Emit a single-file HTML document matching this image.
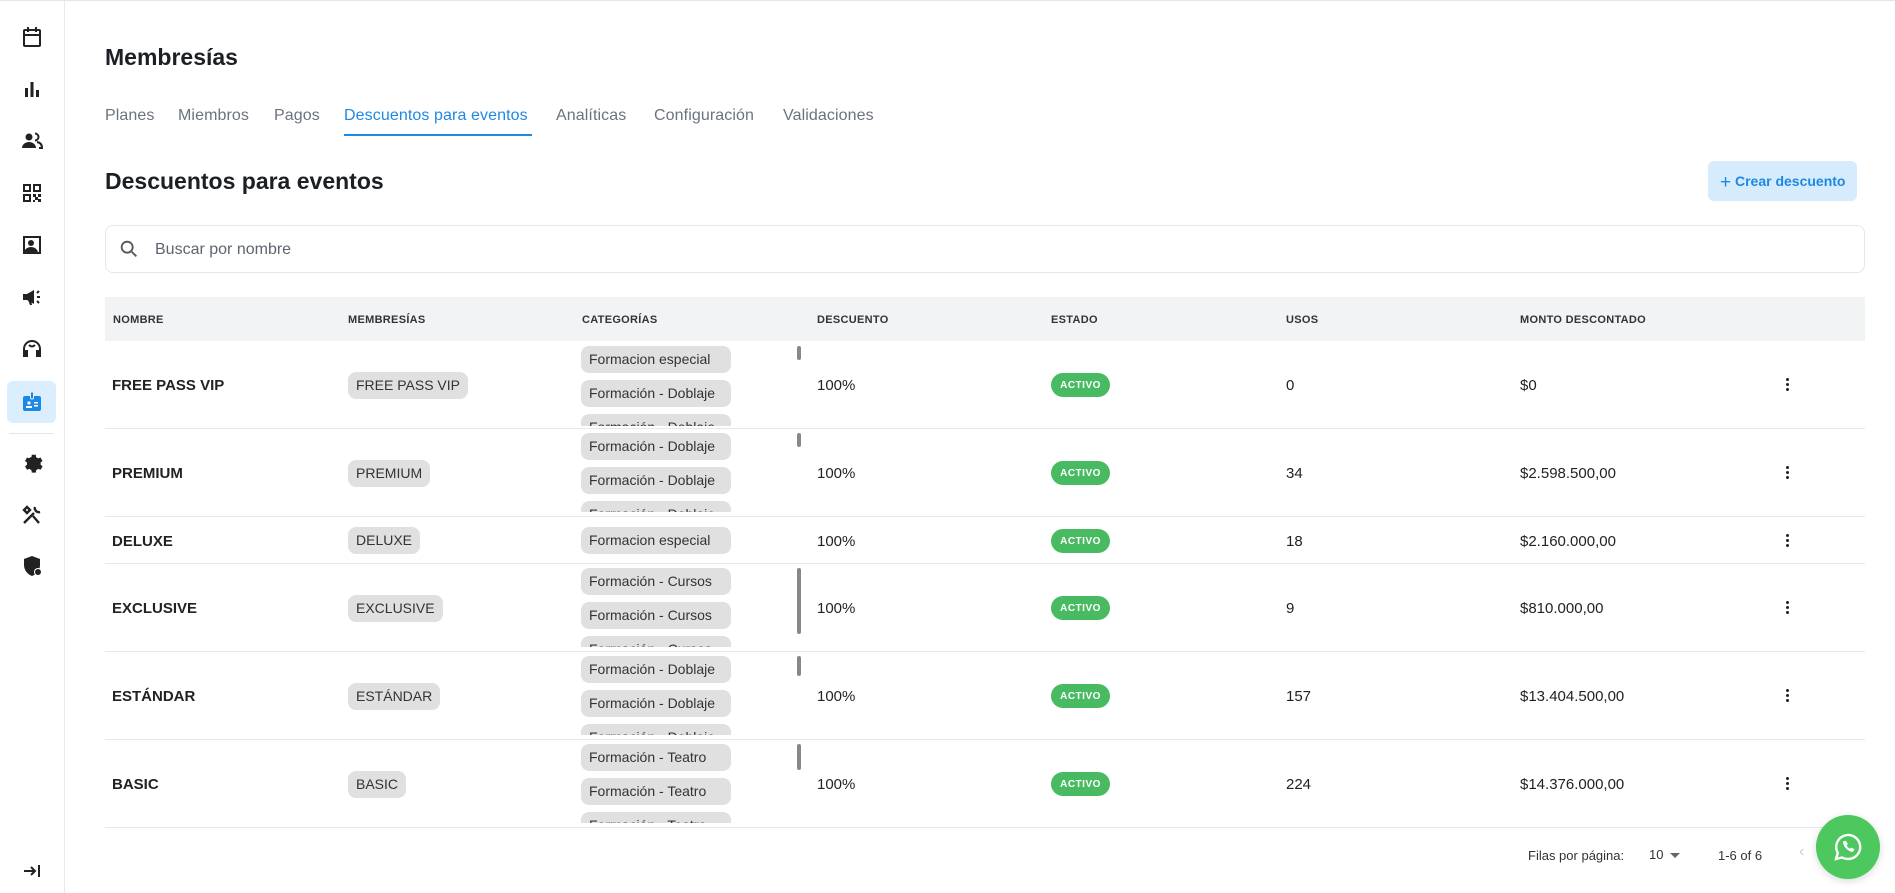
<!DOCTYPE html>
<html><head><meta charset="utf-8"><style>
*{box-sizing:border-box;margin:0;padding:0}
body{width:1895px;height:893px;overflow:hidden;background:#fff;font-family:"Liberation Sans",sans-serif;color:#1f2328;position:relative}
.abs{position:absolute}
.side{left:0;top:0;width:65px;height:893px;border-right:1px solid #e8eaee;border-top:1px solid #e3e5e8}
.ic{position:absolute;left:20px;width:24px;height:24px}
.tab{position:absolute;top:107px;font-size:16px;color:#6b7280;letter-spacing:.1px}
.th{position:absolute;top:314px;font-size:11px;font-weight:bold;color:#333;letter-spacing:.3px}
.row{position:absolute;left:105px;width:1760px;border-bottom:1px solid #e6e8ec}
.cell{position:absolute;font-size:15px;color:#222}
.name{font-weight:bold;left:7px}
.chip{position:absolute;background:#e0e0e0;border-radius:8px;height:27px;line-height:27px;padding:0 8px;font-size:14px;color:#333;white-space:nowrap}
.cats{position:absolute;left:476px;width:150px;overflow:hidden}
.cats .chip{left:0;width:150px;overflow:hidden;text-overflow:ellipsis}
.sb{position:absolute;left:692px;width:4px;background:#888;border-radius:2px}
.act{position:absolute;left:946px;width:59px;height:24px;border-radius:12px;background:#48bb62;color:#fff;font-size:10px;font-weight:bold;display:flex;align-items:center;justify-content:center;letter-spacing:.5px}
.keb{position:absolute;left:1681px;width:4px}
.keb i{display:block;width:3px;height:3px;background:#222;border-radius:50%;margin:0 0 2px}
</style></head><body>
<div class="abs" style="left:0;top:0;width:1895px;height:1px;background:#e3e5e8"></div>
<div class="abs side"></div>
<svg class="ic" style="top:25px" viewBox="0 0 24 24" fill="none" stroke="#222" stroke-width="2"><rect x="4" y="5" width="16" height="16" rx="1"/><path d="M4 10h16M8 2v5M16 2v5"/></svg>
<svg class="ic" style="top:77px" viewBox="0 0 24 24" fill="#222"><rect x="5" y="11" width="3" height="9"/><rect x="10.5" y="5" width="3" height="15"/><rect x="16" y="13" width="3" height="7"/></svg>
<svg class="ic" style="top:129px" viewBox="0 0 24 24" fill="#222"><circle cx="9" cy="8" r="3.5"/><path d="M2 19c0-4 4-6 7-6s7 2 7 6z"/><path d="M15 4.5a3.5 3.5 0 010 7M17 13c3 .5 5 2.5 5 6h-3" stroke="#222" stroke-width="2" fill="none"/></svg>
<svg class="ic" style="top:181px" viewBox="0 0 24 24" fill="#222"><path d="M3 3h8v8H3zM5 5v4h4V5zM13 3h8v8h-8zm2 2v4h4V5zM3 13h8v8H3zm2 2v4h4v-4zM13 13h3v3h-3zM18 13h3v3h-3zM15 16h3v3h-3zM13 19h2v2h-2zM18 18h3v3h-3z"/></svg>
<svg class="ic" style="top:233px" viewBox="0 0 24 24" fill="#222"><path d="M3 3h18v18H3zm2 2v14h14V5z"/><circle cx="11" cy="10" r="3"/><path d="M4 20c0-4 4-6 7-6s7 2 7 6z"/></svg>
<svg class="ic" style="top:285px" viewBox="0 0 24 24" fill="#222"><path d="M3 9h4l7-4v14l-7-4H3z"/><path d="M8 15l2 5h2l-1-5" /><path d="M17 8l2-2M17 12h3M17 16l2 2" stroke="#222" stroke-width="2"/></svg>
<svg class="ic" style="top:337px" viewBox="0 0 24 24" fill="none" stroke="#222" stroke-width="2"><path d="M4 17v-5a8 8 0 0116 0v5"/><path d="M4 14h3v5H4zM17 14h3v5h-3z" fill="#222"/><path d="M9 8c2 2 4 2 6 0"/></svg>
<div class="abs" style="left:7px;top:381px;width:49px;height:42px;background:#dbeefe;border-radius:6px"></div>
<svg class="ic" style="top:390px" viewBox="0 0 24 24" fill="#1e88e5"><rect x="3" y="6" width="18" height="15" rx="2"/><rect x="10.5" y="2" width="3" height="7" rx="1" fill="#1e88e5" stroke="#dbeefe" stroke-width="1"/><circle cx="9" cy="13" r="1.6" fill="#fff"/><rect x="6" y="16" width="6" height="2" fill="#fff"/><rect x="14" y="12" width="4" height="1.5" fill="#fff"/><rect x="14" y="15" width="4" height="1.5" fill="#fff"/></svg>
<div class="abs" style="left:9px;top:433px;width:45px;height:1px;background:#e3e5e8"></div>
<svg class="ic" style="top:451px" viewBox="0 0 24 24" fill="#222"><path d="M12 8a4 4 0 100 8 4 4 0 000-8zm8.5 5.5l2-1.5-2-3.5-2.4.9a7 7 0 00-2-1.2L15.8 5.7h-4l-.4 2.5a7 7 0 00-2 1.2L7 8.5 5 12l2 1.5a7 7 0 000 2.3L5 17.3l2 3.5 2.4-.9a7 7 0 002 1.2l.4 2.5h4l.4-2.5a7 7 0 002-1.2l2.4.9 2-3.5-2-1.5a7 7 0 000-2.3z" transform="translate(0,-2)"/></svg>
<svg class="ic" style="top:503px" viewBox="0 0 24 24" fill="none" stroke="#222" stroke-width="2.4"><path d="M4 20L14 10M7 4l-3 3 3 3 3-3zM13 13l6 7M15 4a4 4 0 005 5"/></svg>
<svg class="ic" style="top:554px" viewBox="0 0 24 24" fill="#222"><path d="M12 2l8 3v6c0 5-3.5 9.5-8 11-4.5-1.5-8-6-8-11V5z"/><circle cx="18" cy="18" r="4" fill="#fff"/><circle cx="18" cy="18" r="3" fill="#222"/></svg>
<svg class="ic" style="top:859px" viewBox="0 0 24 24" fill="none" stroke="#222" stroke-width="2"><path d="M4 12h11M11 8l4 4-4 4M19 6v12"/></svg>

<div class="abs" style="left:105px;top:44px;font-size:23px;font-weight:bold;color:#1c1f24">Membresías</div>
<div class="tab" style="left:105px">Planes</div>
<div class="tab" style="left:178px">Miembros</div>
<div class="tab" style="left:274px">Pagos</div>
<div class="tab" style="left:344px;color:#1e88e5">Descuentos para eventos</div>
<div class="tab" style="left:556px">Analíticas</div>
<div class="tab" style="left:654px">Configuración</div>
<div class="tab" style="left:783px">Validaciones</div>
<div class="abs" style="left:344px;top:134px;width:188px;height:2px;background:#1e88e5"></div>

<div class="abs" style="left:105px;top:168px;font-size:23px;font-weight:bold;color:#1c1f24">Descuentos para eventos</div>
<div class="abs" style="left:1708px;top:161px;width:149px;height:40px;background:#d6ebfc;border-radius:6px;color:#1e88e5;font-size:14px;font-weight:bold;line-height:40px;padding-left:12px"><span style="font-size:19px;font-weight:normal;vertical-align:-2px">+</span>&nbsp;Crear descuento</div>

<div class="abs" style="left:105px;top:225px;width:1760px;height:48px;border:1px solid #e3e6ea;border-radius:8px"></div>
<svg class="abs" style="left:118px;top:238px" width="22" height="22" viewBox="0 0 24 24" fill="none" stroke="#555" stroke-width="2"><circle cx="10" cy="10" r="6"/><path d="M15 15l5 5"/></svg>
<div class="abs" style="left:155px;top:241px;font-size:16px;color:#5d6470">Buscar por nombre</div>

<div class="abs" style="left:105px;top:297px;width:1760px;height:44px;background:#f2f3f5"></div>
<div class="th" style="left:113px">NOMBRE</div>
<div class="th" style="left:348px">MEMBRESÍAS</div>
<div class="th" style="left:582px">CATEGORÍAS</div>
<div class="th" style="left:817px">DESCUENTO</div>
<div class="th" style="left:1051px">ESTADO</div>
<div class="th" style="left:1286px">USOS</div>
<div class="th" style="left:1520px">MONTO DESCONTADO</div>

<div class="row" style="top:341px;height:88px">
 <div class="cell name" style="top:36px">FREE PASS VIP</div>
 <div class="chip" style="left:243px;top:31px">FREE PASS VIP</div>
 <div class="cats" style="top:5px;height:80px"><div class="chip" style="top:0">Formacion especial</div><div class="chip" style="top:34px">Formación - Doblaje</div><div class="chip" style="top:68px">Formación - Doblaje</div></div>
 <div class="sb" style="top:5px;height:14px"></div>
 <div class="cell" style="left:712px;top:36px">100%</div>
 <div class="act" style="top:32px">ACTIVO</div>
 <div class="cell" style="left:1181px;top:36px">0</div>
 <div class="cell" style="left:1415px;top:36px">$0</div>
 <div class="keb" style="top:37px"><i></i><i></i><i></i></div>
</div>
<div class="row" style="top:429px;height:88px">
 <div class="cell name" style="top:36px">PREMIUM</div>
 <div class="chip" style="left:243px;top:31px">PREMIUM</div>
 <div class="cats" style="top:4px;height:79px"><div class="chip" style="top:0">Formación - Doblaje</div><div class="chip" style="top:34px">Formación - Doblaje</div><div class="chip" style="top:68px">Formación - Doblaje</div></div>
 <div class="sb" style="top:4px;height:14px"></div>
 <div class="cell" style="left:712px;top:36px">100%</div>
 <div class="act" style="top:32px">ACTIVO</div>
 <div class="cell" style="left:1181px;top:36px">34</div>
 <div class="cell" style="left:1415px;top:36px">$2.598.500,00</div>
 <div class="keb" style="top:37px"><i></i><i></i><i></i></div>
</div>
<div class="row" style="top:517px;height:47px">
 <div class="cell name" style="top:16px">DELUXE</div>
 <div class="chip" style="left:243px;top:10px">DELUXE</div>
 <div class="cats" style="top:10px;height:27px"><div class="chip" style="top:0">Formacion especial</div></div>
 <div class="cell" style="left:712px;top:16px">100%</div>
 <div class="act" style="top:12px">ACTIVO</div>
 <div class="cell" style="left:1181px;top:16px">18</div>
 <div class="cell" style="left:1415px;top:16px">$2.160.000,00</div>
 <div class="keb" style="top:17px"><i></i><i></i><i></i></div>
</div>
<div class="row" style="top:564px;height:88px">
 <div class="cell name" style="top:36px">EXCLUSIVE</div>
 <div class="chip" style="left:243px;top:31px">EXCLUSIVE</div>
 <div class="cats" style="top:4px;height:79px"><div class="chip" style="top:0">Formación - Cursos</div><div class="chip" style="top:34px">Formación - Cursos</div><div class="chip" style="top:68px">Formación - Cursos</div></div>
 <div class="sb" style="top:4px;height:66px"></div>
 <div class="cell" style="left:712px;top:36px">100%</div>
 <div class="act" style="top:32px">ACTIVO</div>
 <div class="cell" style="left:1181px;top:36px">9</div>
 <div class="cell" style="left:1415px;top:36px">$810.000,00</div>
 <div class="keb" style="top:37px"><i></i><i></i><i></i></div>
</div>
<div class="row" style="top:652px;height:88px">
 <div class="cell name" style="top:36px">ESTÁNDAR</div>
 <div class="chip" style="left:243px;top:31px">ESTÁNDAR</div>
 <div class="cats" style="top:4px;height:79px"><div class="chip" style="top:0">Formación - Doblaje</div><div class="chip" style="top:34px">Formación - Doblaje</div><div class="chip" style="top:68px">Formación - Doblaje</div></div>
 <div class="sb" style="top:4px;height:20px"></div>
 <div class="cell" style="left:712px;top:36px">100%</div>
 <div class="act" style="top:32px">ACTIVO</div>
 <div class="cell" style="left:1181px;top:36px">157</div>
 <div class="cell" style="left:1415px;top:36px">$13.404.500,00</div>
 <div class="keb" style="top:37px"><i></i><i></i><i></i></div>
</div>
<div class="row" style="top:740px;height:88px">
 <div class="cell name" style="top:36px">BASIC</div>
 <div class="chip" style="left:243px;top:31px">BASIC</div>
 <div class="cats" style="top:4px;height:79px"><div class="chip" style="top:0">Formación - Teatro</div><div class="chip" style="top:34px">Formación - Teatro</div><div class="chip" style="top:68px">Formación - Teatro</div></div>
 <div class="sb" style="top:4px;height:26px"></div>
 <div class="cell" style="left:712px;top:36px">100%</div>
 <div class="act" style="top:32px">ACTIVO</div>
 <div class="cell" style="left:1181px;top:36px">224</div>
 <div class="cell" style="left:1415px;top:36px">$14.376.000,00</div>
 <div class="keb" style="top:37px"><i></i><i></i><i></i></div>
</div>

<div class="abs" style="left:1528px;top:848px;font-size:13px;color:#333">Filas por página:</div>
<div class="abs" style="left:1649px;top:847px;font-size:13px;color:#333">10</div>
<div class="abs" style="left:1670px;top:853px;width:0;height:0;border-left:5px solid transparent;border-right:5px solid transparent;border-top:5px solid #666"></div>
<div class="abs" style="left:1718px;top:848px;font-size:13px;color:#333">1-6 of 6</div>
<div class="abs" style="left:1799px;top:843px;font-size:16px;color:#ccc">‹</div>
<div class="abs" style="left:1816px;top:815px;width:64px;height:64px;border-radius:50%;background:#4cc85f;box-shadow:0 2px 8px rgba(0,0,0,.15)"></div>
<svg class="abs" style="left:1830px;top:829px" width="36" height="36" viewBox="0 0 24 24" fill="none" stroke="#fff" stroke-width="1.6"><path d="M4 20l1.2-4A8 8 0 1112 20a8 8 0 01-4-1z"/><path d="M9 8.5c0 3 3 6 6 6.5l1-1.3-1.8-1-1 .8c-1-.5-2-1.5-2.5-2.5l.8-1-1-1.8z" fill="#fff" stroke-width=".6"/></svg>
</body></html>
